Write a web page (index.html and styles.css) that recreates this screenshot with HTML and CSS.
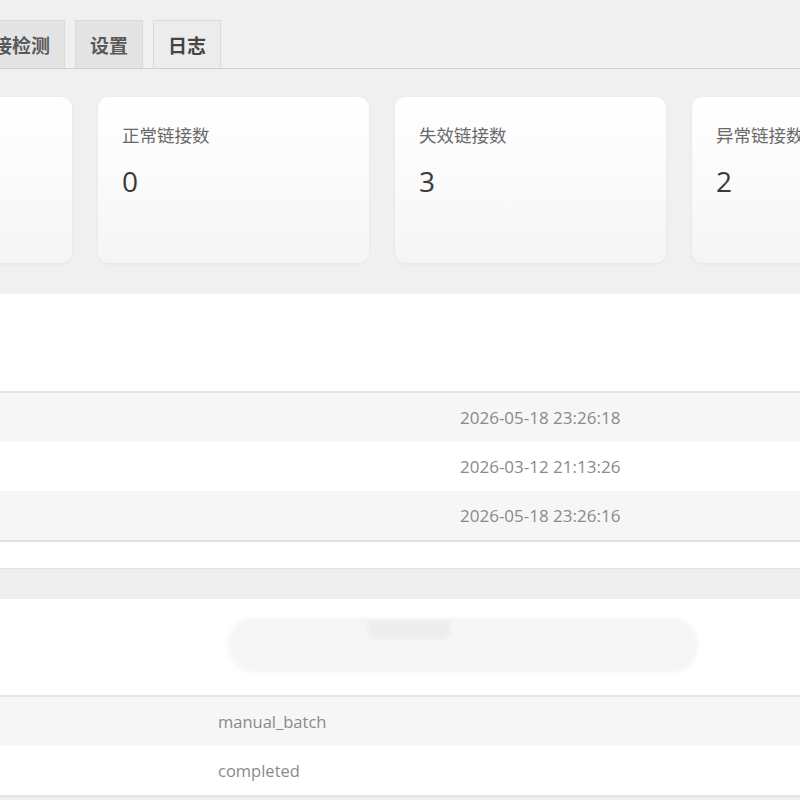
FILE: index.html
```html
<!DOCTYPE html>
<html lang="zh-CN">
<head>
<meta charset="utf-8">
<title>链接检测 - 日志</title>
<link rel="stylesheet" href="styles.css">
</head>
<body>
<div class="page">
  <nav class="tabs">
    <div class="tab">链接检测</div>
    <div class="tab">设置</div>
    <div class="tab active">日志</div>
  </nav>

  <section class="stats">
    <div class="card"></div>
    <div class="card"><div class="card-label">正常链接数</div><div class="card-value">0</div></div>
    <div class="card"><div class="card-label">失效链接数</div><div class="card-value">3</div></div>
    <div class="card"><div class="card-label">异常链接数</div><div class="card-value">2</div></div>
  </section>

  <section class="panel">
    <div class="panel-head"></div>
    <div class="rows">
      <div class="row alt"><span class="cell-date">2026-05-18 23:26:18</span></div>
      <div class="row"><span class="cell-date">2026-03-12 21:13:26</span></div>
      <div class="row alt"><span class="cell-date">2026-05-18 23:26:16</span></div>
    </div>
    <div class="panel-foot"></div>
  </section>

  <div class="band"></div>

  <section class="panel second">
    <div class="panel-head2">
      <div class="blur-pill"><span class="pill-notch"></span></div>
    </div>
    <div class="rows">
      <div class="row alt"><span class="cell-val">manual_batch</span></div>
      <div class="row"><span class="cell-val">completed</span></div>
    </div>
  </section>
</div>
</body>
</html>
```

FILE: styles.css
```css
html, body {
  margin: 0;
  padding: 0;
  background: #f0f0f0;
  overflow: hidden;
}

body {
  font-family: "Open Sans", "Noto Sans CJK SC", sans-serif;
  color: #333;
}

.page {
  width: 1240px;
  margin-left: -220px;
  padding-top: 20px;
}

.tabs {
  display: flex;
  gap: 10px;
  padding-left: 179px;
  border-bottom: 1px solid #cfcfcf;
  height: 48px;
}

.tab {
  box-sizing: border-box;
  height: 48px;
  padding: 0 14px;
  display: flex;
  align-items: center;
  background: #e4e4e4;
  border: 1px solid #dadada;
  border-bottom: none;
  font-family: "Noto Sans CJK SC", sans-serif;
  font-size: 19px;
  font-weight: 600;
  color: #595959;
}

.tab.active {
  background: #ececec;
  color: #444;
}

.stats {
  display: grid;
  grid-template-columns: repeat(4, 271px);
  gap: 26px;
  padding-left: 21px;
  margin-top: 28px;
}

.card {
  box-sizing: border-box;
  height: 166px;
  border-radius: 11px;
  background: linear-gradient(180deg, #ffffff 0%, #fafafa 55%, #f5f5f5 100%);
  box-shadow: 0 1px 3px rgba(0, 0, 0, 0.06);
  padding: 26px 24px;
}

.card-label {
  font-family: "Noto Sans CJK SC", sans-serif;
  font-size: 17.5px;
  color: #6a6a6a;
  line-height: 24px;
}

.card-value {
  font-family: "Open Sans", sans-serif;
  font-size: 28px;
  color: #3a3a3a;
  line-height: 36px;
  margin-top: 16px;
}

.panel {
  background: #fff;
  margin-top: 31px;
}

.panel-head {
  height: 97px;
  border-bottom: 2px solid #e4e4e4;
}

.row {
  height: 49px;
  display: flex;
  align-items: center;
  background: #fff;
}

.row.alt {
  background: #f6f6f6;
}

.cell-date {
  margin-left: 680px;
  font-size: 17px;
  color: #8a8a8a;
}

.panel-foot {
  height: 26px;
  border-top: 2px solid #e2e2e2;
  border-bottom: 1px solid #e2e2e2;
}

.band {
  height: 30px;
  background: #efefef;
}

.panel.second {
  margin-top: 0;
}

.panel-head2 {
  height: 96px;
  border-bottom: 2px solid #e6e6e6;
  display: flex;
  align-items: center;
  padding-left: 448px;
}

.blur-pill {
  position: relative;
  width: 470px;
  height: 52px;
  border-radius: 26px;
  background: #f6f6f6;
  border-top: 2px solid #ececec;
  filter: blur(2px);
  margin-top: -2px;
}

.pill-notch {
  position: absolute;
  left: 140px;
  top: 0;
  width: 82px;
  height: 18px;
  background: #ededed;
  border-radius: 0 0 8px 8px;
}

.cell-val {
  margin-left: 438px;
  font-size: 16.5px;
  color: #8a8a8a;
}

.second .rows {
  border-bottom: 2px solid #e4e4e4;
}
```
